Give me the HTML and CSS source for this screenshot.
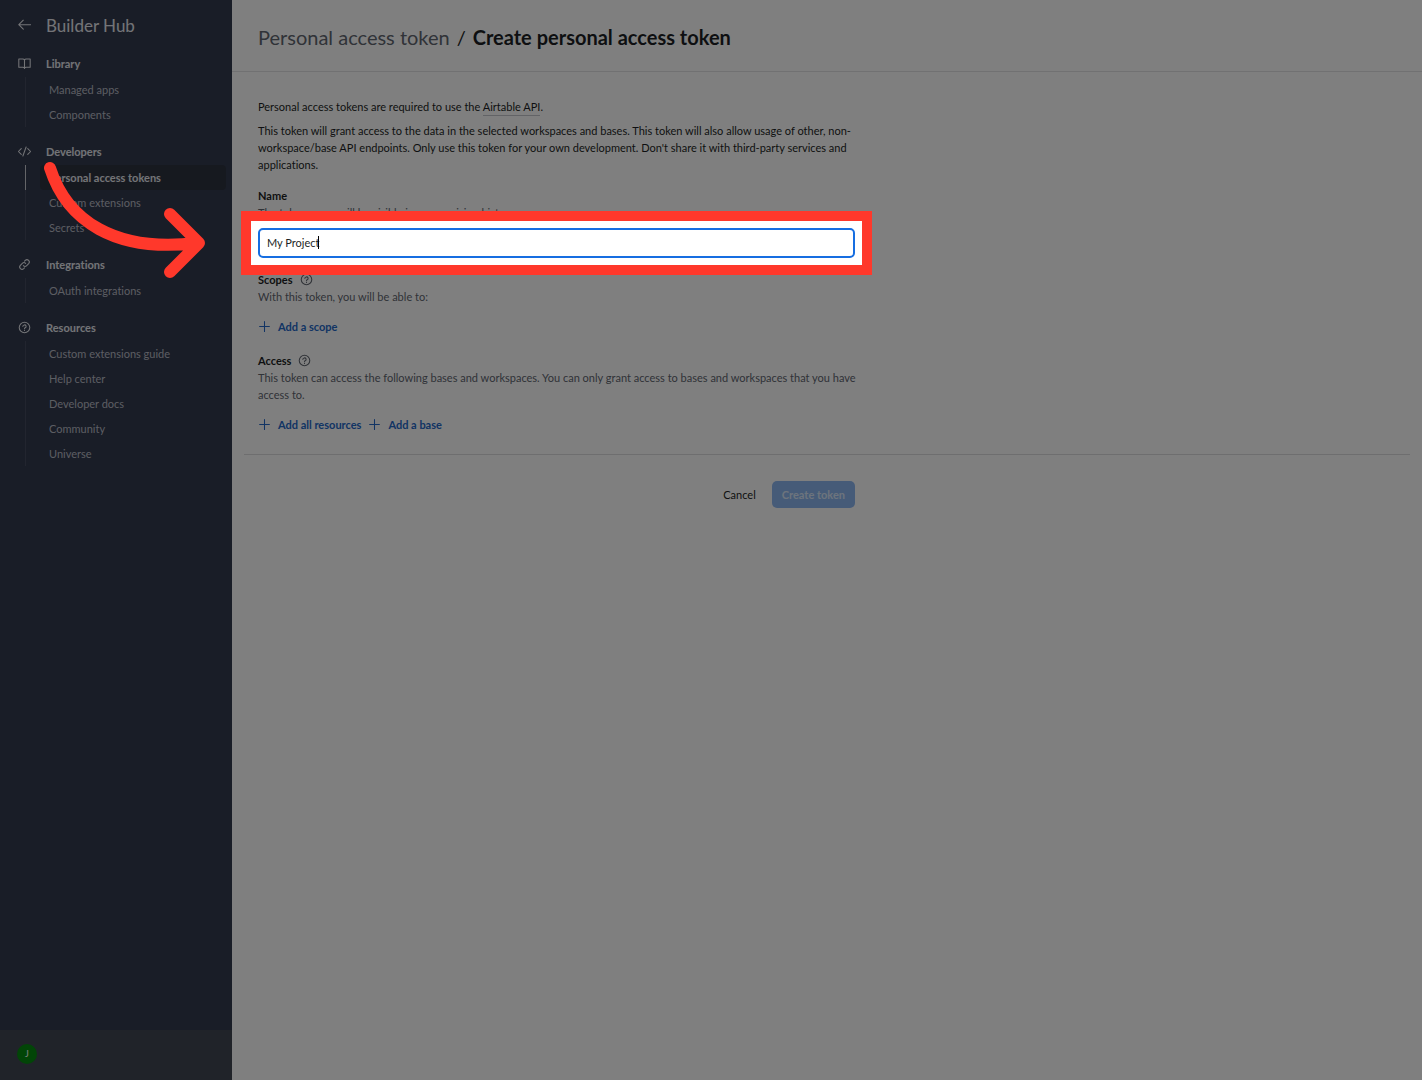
FILE: index.html
```html
<!DOCTYPE html>
<html lang="en">
<head>
<meta charset="utf-8">
<meta name="viewport" content="width=device-width, initial-scale=1">
<title>Create personal access token - Builder Hub</title>
<link rel="stylesheet" href="styles.css">
</head>
<body>
<svg class="sprite" aria-hidden="true">
  <symbol id="help" viewBox="0 0 16 16"><circle cx="8" cy="8" r="6.5"/><path d="M6 6.6a2 1.8 0 1 1 2.9 1.6C8.2 8.5 8 8.7 8 9.3"/><path d="M8 11v.6"/></symbol>
  <symbol id="plus" viewBox="0 0 16 16"><path d="M8 2v12M2 8h12"/></symbol>
</svg>
<div class="app">
  <aside class="sidebar">
    <div class="brand">
      <a class="back" href="#" aria-label="Back"><svg class="icon" viewBox="0 0 16 16"><path d="M15.500 7H1M6.500 1.500 1 7l5.500 5.500"/></svg></a>
      <span class="brand-name">Builder Hub</span>
    </div>
    <nav class="nav">
      <section class="group">
        <h2 class="group-title"><svg class="icon" viewBox="0 0 16 16"><path d="M8 3.500v10.500M8 3.500C7.500 2.800 7 2.500 6 2.500H1v10h5c1 0 1.700.3 2 1 .3-.7 1-1 2-1h5v-10h-5c-1 0-1.500.3-2 1z"/></svg>Library</h2>
        <ul class="items">
          <li><a class="item" href="#">Managed apps</a></li>
          <li><a class="item" href="#">Components</a></li>
        </ul>
      </section>
      <section class="group">
        <h2 class="group-title"><svg class="icon" viewBox="0 0 16 16"><path d="M4 4.500.5 8 4 11.500M12 4.500 15.500 8 12 11.500M10 2.500l-4 11"/></svg>Developers</h2>
        <ul class="items">
          <li class="current"><a class="item" href="#" aria-current="page">Personal access tokens</a></li>
          <li><a class="item" href="#">Custom extensions</a></li>
          <li><a class="item" href="#">Secrets</a></li>
        </ul>
      </section>
      <section class="group">
        <h2 class="group-title"><svg class="icon" viewBox="0 0 16 16"><path d="M6.600 9.400a2.900 2.900 0 0 0 4.100 0l2.400-2.400a2.900 2.900 0 0 0-4.100-4.100l-1 1M9.400 6.600a2.900 2.900 0 0 0-4.100 0L2.900 9a2.900 2.900 0 0 0 4.100 4.100l1-1"/></svg>Integrations</h2>
        <ul class="items">
          <li><a class="item" href="#">OAuth integrations</a></li>
        </ul>
      </section>
      <section class="group">
        <h2 class="group-title"><svg class="icon"><use href="#help"/></svg>Resources</h2>
        <ul class="items">
          <li><a class="item" href="#">Custom extensions guide</a></li>
          <li><a class="item" href="#">Help center</a></li>
          <li><a class="item" href="#">Developer docs</a></li>
          <li><a class="item" href="#">Community</a></li>
          <li><a class="item" href="#">Universe</a></li>
        </ul>
      </section>
    </nav>
    <footer class="account"><button class="avatar" type="button">J</button></footer>
  </aside>

  <main class="main">
    <header class="topbar">
      <h1 class="crumbs"><a class="crumb" href="#">Personal access token</a><span class="slash">/</span><span class="crumb-current">Create personal access token</span></h1>
    </header>
    <form class="form">
      <p class="intro">Personal access tokens are required to use the <a class="link" href="#">Airtable API</a>.</p>
      <p class="intro">This token will grant access to the data in the selected workspaces and bases. This token will also allow usage of other, non-workspace/base API endpoints. Only use this token for your own development. Don't share it with third-party services and applications.</p>

      <div class="name-block">
        <label class="heading" for="token-name">Name</label>
        <p class="hint">The token name will be visible in your revision history.</p>
        <div class="field">
          <div class="spotlight"></div>
          <svg class="arrow" viewBox="0 0 162 118" aria-hidden="true"><path d="M7 7C24 60 72 92 154 82M127 53l29 29-29 29"/></svg>
          <input class="text-input" id="token-name" type="text" value="My Project" autocomplete="off">
          <span class="caret"></span>
        </div>
      </div>

      <section class="block">
        <h2 class="heading">Scopes <svg class="icon help"><use href="#help"/></svg></h2>
        <p class="hint">With this token, you will be able to:</p>
        <div class="adders">
          <button class="add" type="button"><svg class="icon plus"><use href="#plus"/></svg>Add a scope</button>
        </div>
      </section>
      <section class="block">
        <h2 class="heading">Access <svg class="icon help"><use href="#help"/></svg></h2>
        <p class="hint">This token can access the following bases and workspaces. You can only grant access to bases and workspaces that you have<br>access to.</p>
        <div class="adders">
          <button class="add" type="button"><svg class="icon plus"><use href="#plus"/></svg>Add all resources</button>
          <button class="add" type="button"><svg class="icon plus"><use href="#plus"/></svg>Add a base</button>
        </div>
      </section>
    </form>
    <hr class="rule">
    <div class="actions">
      <button class="cancel" type="button">Cancel</button>
      <button class="create" type="button">Create token</button>
    </div>
  </main>
</div>
</body>
</html>
```
FILE: styles.css
```css
* { box-sizing: border-box; }

body {
  margin: 0;
  font: 11px/17px Lato, "Noto Sans", sans-serif;
  font-variant-ligatures: none;
  color: #1d1f25;
  background: #fff;
}

h1, h2, p, ul { margin: 0; padding: 0; }
ul { list-style: none; }
a { color: inherit; text-decoration: none; }
button { font: inherit; color: inherit; background: none; border: 0; padding: 0; }

.sprite { display: none; }
.icon {
  width: 13px;
  height: 13px;
  flex: none;
  fill: none;
  stroke: currentColor;
  stroke-width: 1.3;
  stroke-linecap: round;
  stroke-linejoin: round;
}

.app { display: flex; min-height: 100vh; overflow: hidden; }

/* Sidebar */
.sidebar {
  width: 232px;
  flex: none;
  display: flex;
  flex-direction: column;
  background: #333b4e;
  color: #e6e8ee;
}
.brand {
  display: flex;
  align-items: center;
  gap: 15px;
  height: 39px;
  padding: 12px 18px 0;
}
.back { display: flex; }
.brand-name { font-size: 17px; line-height: 27px; }
.nav { flex: 1; }
.group-title {
  display: flex;
  align-items: center;
  gap: 15px;
  height: 38px;
  padding: 11px 18px 0;
  font-size: 11px;
  font-weight: 700;
}
.items { margin: 0 6px 0 25px; }
.items li { border-left: 1px solid #454b5f; padding-left: 14px; }
.items .current { border-color: #c8cad0; }
.item {
  display: block;
  height: 25px;
  padding-left: 9px;
  line-height: 25px;
  color: #b9bcc6;
  border-radius: 4px;
}
.current .item { background: #2d323f; color: #e6e8ee; font-weight: 700; }
.account {
  display: flex;
  align-items: center;
  height: 50px;
  padding: 0 17px 3px;
  background: #404653;
}
.avatar {
  width: 20px;
  height: 20px;
  border-radius: 50%;
  background: #048a0e;
  color: #fff;
  font-size: 9px;
  line-height: 20px;
}

/* Page header */
.main { flex: 1; min-width: 0; }
.topbar {
  height: 72px;
  padding: 22px 26px 0;
  border-bottom: 1px solid #e2e2e4;
}
.crumbs { display: flex; gap: 7px; font-size: 20px; line-height: 30px; font-weight: 400; }
.crumb { color: #616670; }
.crumb-current { font-weight: 700; }

/* Form */
.form { max-width: 649px; padding: 26px 26px 0; }
.intro { margin-bottom: 7px; }
.link { border-bottom: 1px solid #c4c7cd; padding-bottom: 2px; }
.name-block { margin-top: 14px; }
.heading {
  display: flex;
  align-items: center;
  gap: 7px;
  font-size: 11px;
  line-height: 17px;
  font-weight: 700;
}
.hint { color: #616670; white-space: nowrap; }
.help { color: #616670; }
.field { position: relative; margin-top: 7px; }
.text-input {
  display: block;
  width: 100%;
  height: 30px;
  padding: 0 7px 1px;
  border: 2px solid #166ee1;
  border-radius: 5px;
  outline: 0;
  font: inherit;
  color: inherit;
  background: #fff;
}
.caret {
  position: absolute;
  left: 60px;
  top: 8px;
  width: 1px;
  height: 13px;
  background: #000;
}
.block { padding-top: 13px; }
.block + .block { padding-top: 17px; }
.adders { display: flex; gap: 7px; margin-top: 13px; }
.add {
  display: flex;
  align-items: center;
  gap: 7px;
  height: 17px;
  color: #2468c8;
  font-weight: 700;
}
.rule { margin: 21px 12px 0; border: 0; border-top: 1px solid #dcdcde; }

.actions {
  display: flex;
  justify-content: flex-end;
  align-items: center;
  gap: 16px;
  max-width: 649px;
  padding: 26px 26px 0;
}
.create {
  height: 27px;
  padding: 0 10px;
  border-radius: 5px;
  background: #8cb7f1;
  color: #dbe8fa;
  font-weight: 700;
}

/* Tutorial callout: dims the page around the field and points at it */
.spotlight {
  position: absolute;
  inset: -17px;
  border: 10px solid #ff382b;
  box-shadow: 0 0 0 4000px rgba(0, 0, 0, .5);
  pointer-events: none;
}
.arrow {
  position: absolute;
  left: -215px;
  top: -67px;
  width: 162px;
  height: 118px;
  fill: none;
  stroke: #ff382b;
  stroke-width: 12;
  stroke-linecap: round;
  stroke-linejoin: round;
  pointer-events: none;
}
```
